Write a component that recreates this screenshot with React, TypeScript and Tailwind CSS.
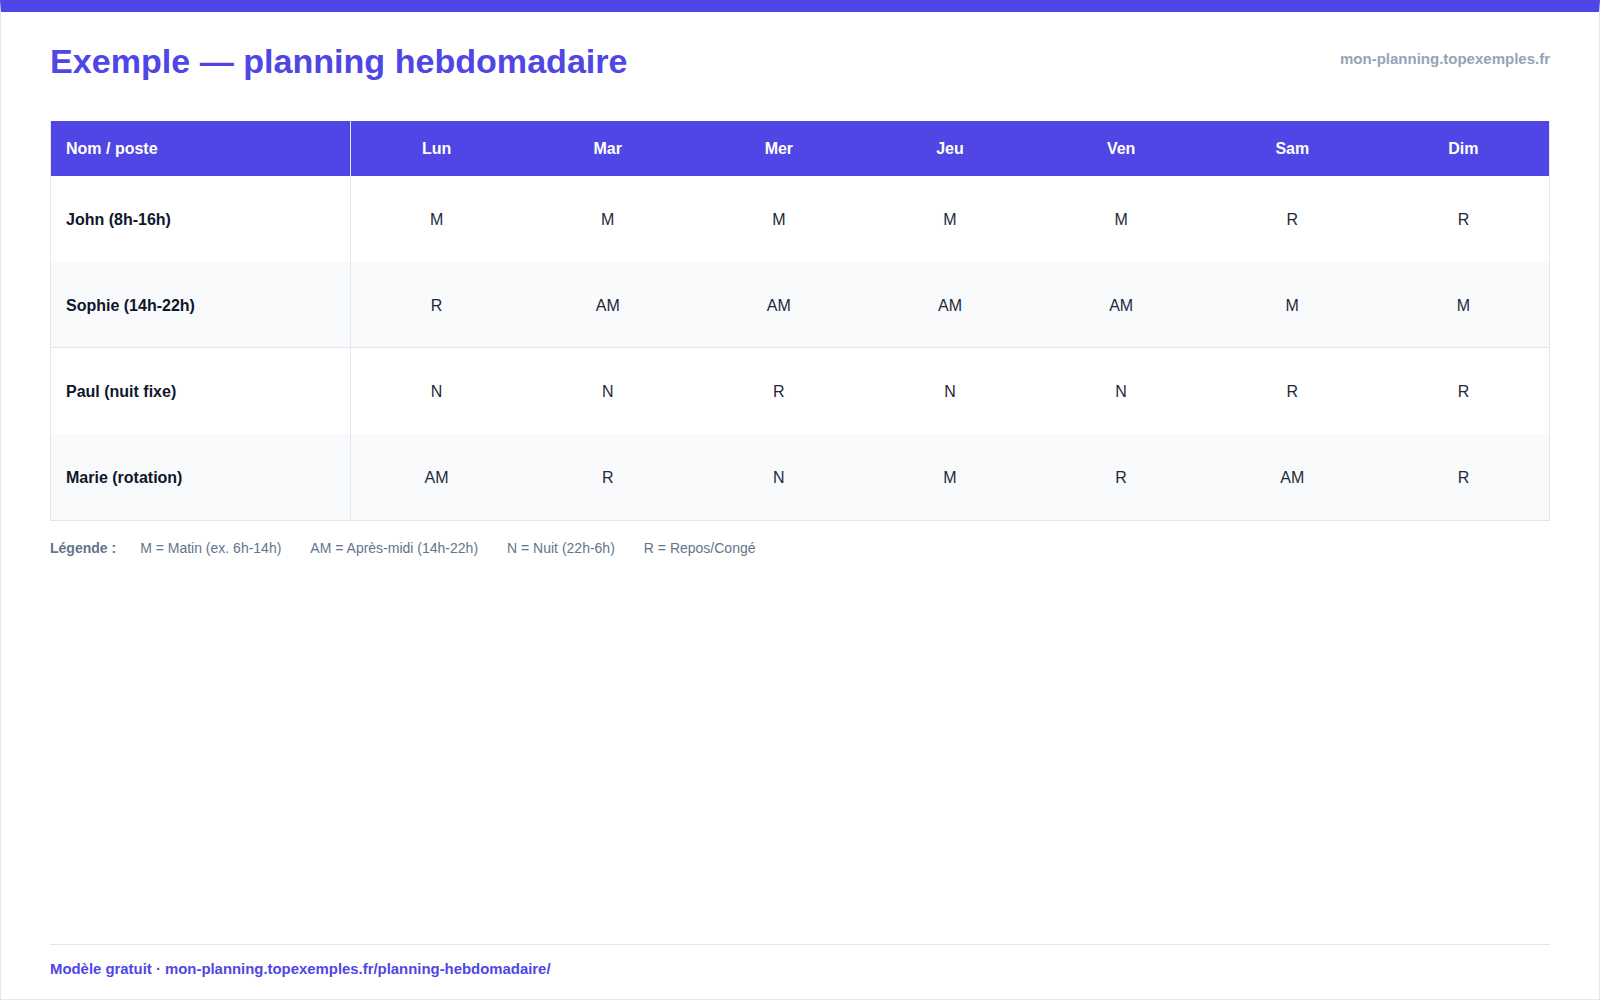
import React from "react";

const days = ["Lun", "Mar", "Mer", "Jeu", "Ven", "Sam", "Dim"];

const rows: { name: string; shifts: string[] }[] = [
  { name: "John (8h-16h)", shifts: ["M", "M", "M", "M", "M", "R", "R"] },
  { name: "Sophie (14h-22h)", shifts: ["R", "AM", "AM", "AM", "AM", "M", "M"] },
  { name: "Paul (nuit fixe)", shifts: ["N", "N", "R", "N", "N", "R", "R"] },
  { name: "Marie (rotation)", shifts: ["AM", "R", "N", "M", "R", "AM", "R"] },
];

const legend = [
  "M = Matin (ex. 6h-14h)",
  "AM = Après-midi (14h-22h)",
  "N = Nuit (22h-6h)",
  "R = Repos/Congé",
];

export default function App() {
  return (
    <div className="w-[1600px] h-[1000px] bg-white box-border border border-[#e5e7eb] border-t-[12px] border-t-[#4f46e5] flex flex-col px-[49px] font-['Liberation_Sans',Arial,sans-serif]">
      <header className="flex justify-between items-start pt-[29px]">
        <h1 className="text-[34.1px] leading-[41px] font-bold text-[#4f46e5] m-0">
          Exemple — planning hebdomadaire
        </h1>
        <div className="mt-[9px] text-[15px] leading-[17px] font-bold text-[#94a3b8]">
          mon-planning.topexemples.fr
        </div>
      </header>

      <div className="mt-[39px] border border-t-0 border-[#e5e7eb]">
        <div className="grid grid-cols-[300px_repeat(7,minmax(0,1fr))] h-[55px] bg-[#4f46e5] text-white font-bold text-[16px]">
          <div className="flex items-center pl-[15px] pt-[1px] border-r border-[#e2e8f0]">Nom / poste</div>
          {days.map((d) => (
            <div key={d} className="flex items-center justify-center pt-[1px]">
              {d}
            </div>
          ))}
        </div>
        {rows.map((r, i) => (
          <div
            key={r.name}
            className={
              i % 2 === 1
                ? "grid grid-cols-[300px_repeat(7,minmax(0,1fr))] h-[86px] bg-[#f8fafc] border-b border-[#e5e7eb] last:border-b-0 text-[16px]"
                : "grid grid-cols-[300px_repeat(7,minmax(0,1fr))] h-[86px] bg-white text-[16px]"
            }
          >
            <div className="flex items-center pl-[15px] pt-[2px] border-r border-[#e2e8f0] font-bold text-[#0f172a]">
              {r.name}
            </div>
            {r.shifts.map((s, j) => (
              <div key={j} className="flex items-center justify-center pt-[2px] text-[#1e293b]">
                {s}
              </div>
            ))}
          </div>
        ))}
      </div>

      <div className="mt-[17px] flex items-center text-[14px] leading-[20px] text-[#64748b]">
        <span className="font-bold mr-[24px]">Légende :</span>
        <div className="flex gap-[29px]">
          {legend.map((l) => (
            <span key={l}>{l}</span>
          ))}
        </div>
      </div>

      <footer className="mt-auto border-t border-[#e5e7eb] pt-[14px] pb-[20px] text-[14.9px] leading-[20px] font-bold text-[#4f46e5]">
        Modèle gratuit · mon-planning.topexemples.fr/planning-hebdomadaire/
      </footer>
    </div>
  );
}
